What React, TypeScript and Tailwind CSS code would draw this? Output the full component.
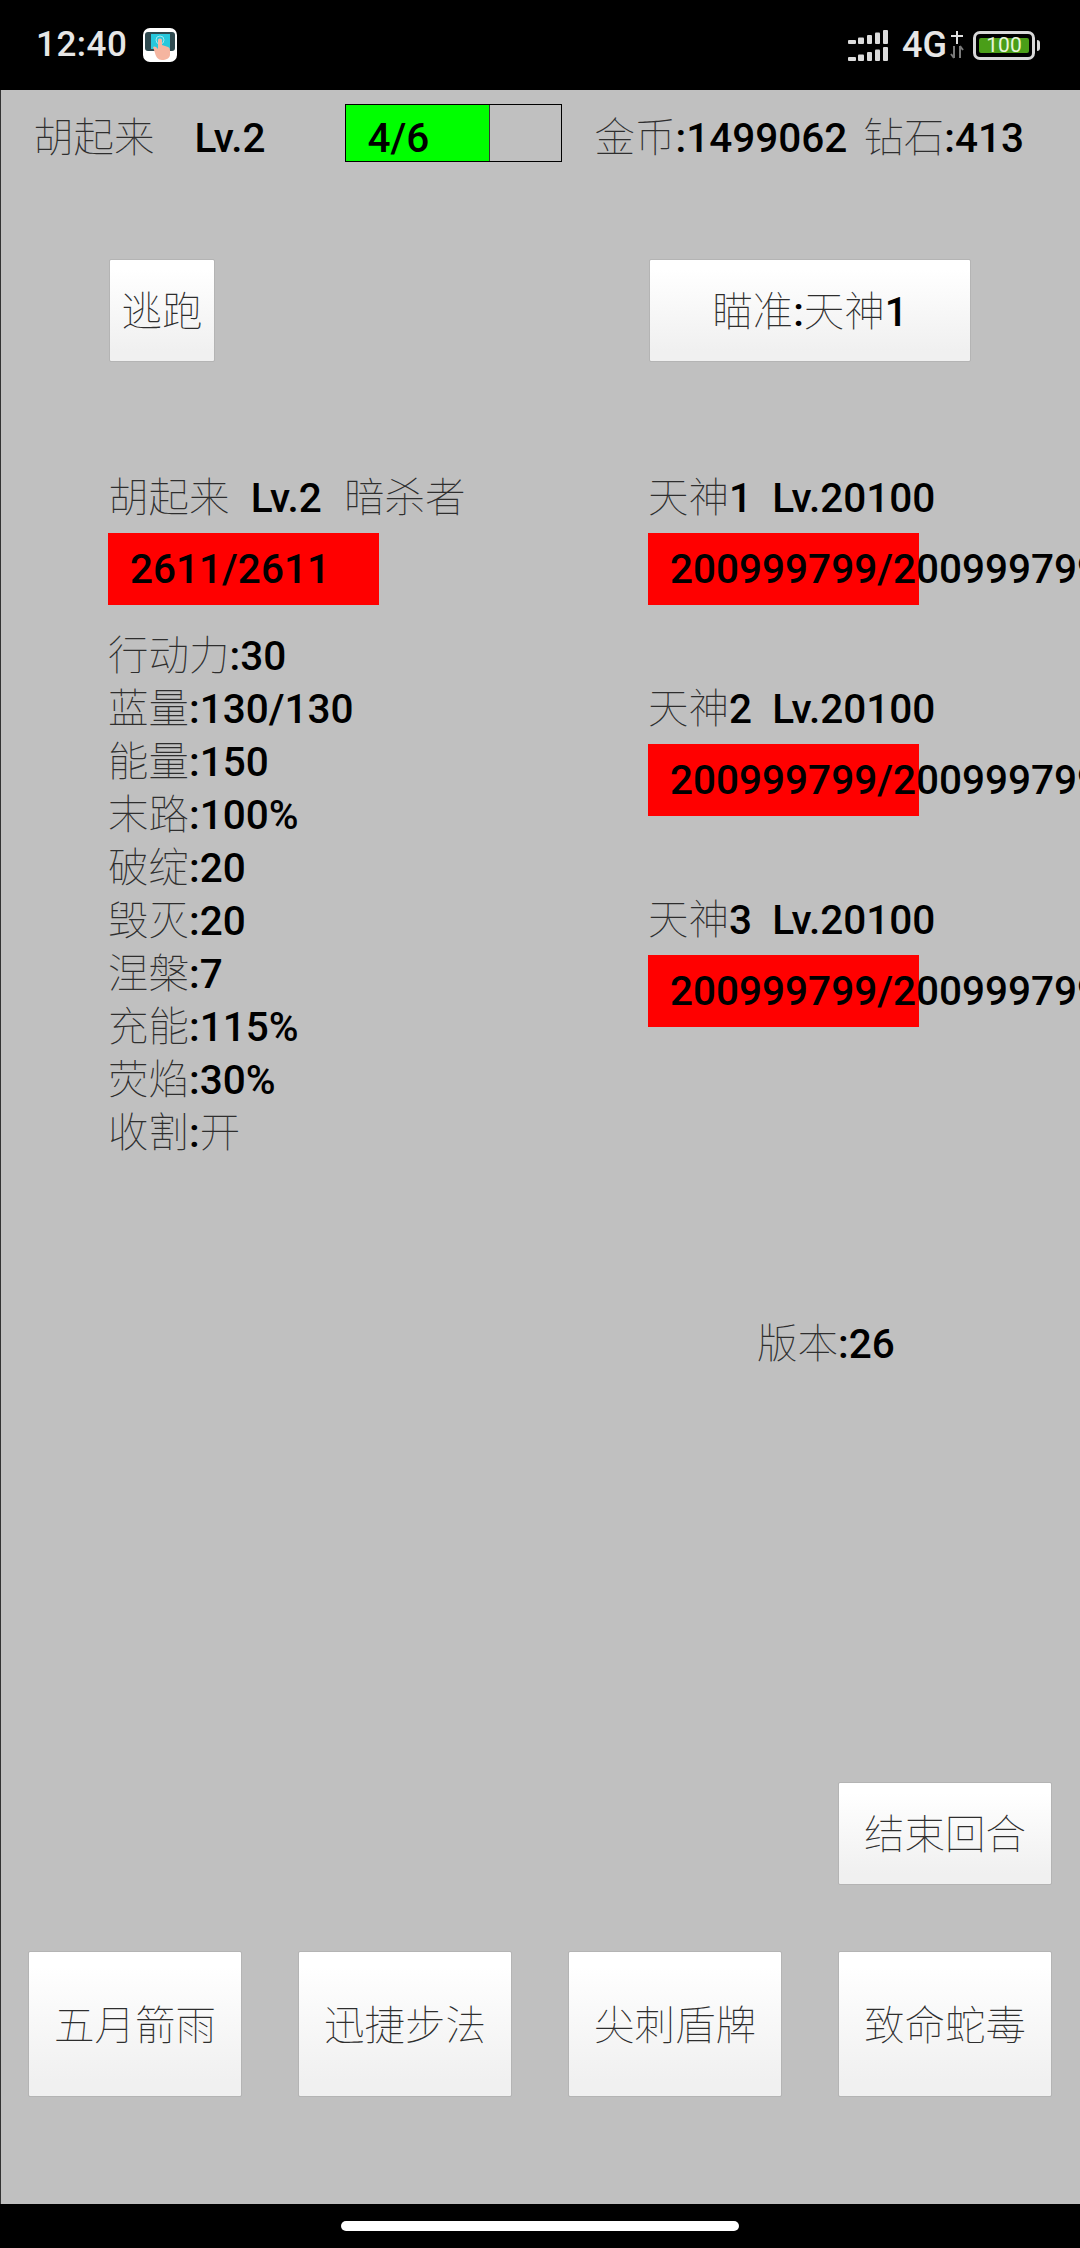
const latin = '"Roboto", "Noto Sans CJK SC", sans-serif';

function Cn({ children }: { children: string }) {
  return <span className="font-thin text-[#2e2e2e]">{children}</span>;
}

function GameButton({ className, children }: { className: string; children: React.ReactNode }) {
  return (
    <button className={`flex items-center justify-center rounded-[2px] border border-[#b4b4b4] bg-gradient-to-b from-white from-10% to-[#f0f0f0] to-90% pt-[4px] whitespace-pre ${className}`}>
      {children}
    </button>
  );
}

function HpBar({ text }: { text: string }) {
  return (
    <div className="flex h-[72px] w-[271px] items-center bg-[#ff0000] pl-[22px] whitespace-nowrap">
      {text}
    </div>
  );
}

function Enemy({ n }: { n: number }) {
  return (
    <div className="h-[211px]">
      <div className="h-[62px] leading-[55px] whitespace-pre">
        <Cn>天神</Cn>
        {n}  Lv.20100
      </div>
      <HpBar text="200999799/200999799" />
    </div>
  );
}

function AppIcon() {
  return (
    <svg width="34" height="34" viewBox="0 0 34 34">
      <rect width="34" height="34" rx="7" fill="#fff" />
      <rect x="2" y="4" width="30" height="19" rx="3" fill="#2f4a50" />
      <rect x="8" y="6" width="19" height="15" fill="#27c8dc" />
      <circle cx="17" cy="12" r="4" fill="none" stroke="#9be8f0" strokeWidth="1" />
      <path d="M15 12c0-2 4-2 4 0v5l6 2c2 1 2 2 2 4v4c0 3-4 5-8 5s-6-3-7-7l-2-6c1-1 3-1 5 2z" fill="#f5b5a0" />
    </svg>
  );
}

function Signal() {
  const bars = [
    [0, 8, 4],
    [10, 6, 6.5],
    [19, 5, 9],
    [27, 5, 11.5],
    [35, 5, 14],
  ];
  return (
    <svg width="40" height="31" viewBox="0 0 40 31" fill="#dcdcdc">
      {bars.map(([x, w, h]) => (
        <g key={x}>
          <rect x={x} y={14 - h} width={w} height={h} rx="1" />
          <rect x={x} y={31 - h} width={w} height={h} rx="1" />
        </g>
      ))}
    </svg>
  );
}

function DataArrows() {
  return (
    <svg width="15" height="28" viewBox="0 0 15 28" fill="none" strokeWidth="2">
      <path d="M7 0v13M1 5h12" stroke="#e0e0e0" />
      <path d="M4 15v12M1 23l3 4M10 15v12M10 15l3 4" stroke="#7a7a7a" />
    </svg>
  );
}

function Battery() {
  return (
    <div className="flex items-center gap-[2px]">
      <div className="flex h-[29px] w-[62px] items-center justify-center rounded-[7px] border-[3px] border-[#d8d8d8] px-[3px] py-[4px]">
        <div className="flex h-full w-full items-center justify-center rounded-[2px] bg-[#4a9e18] text-[21px] leading-none font-normal text-[#e8f5dc]">
          100
        </div>
      </div>
      <div className="h-[11px] w-[3px] rounded-r-sm bg-[#d8d8d8]" />
    </div>
  );
}

export default function App() {
  const stats = [
    ["行动力", ":30"],
    ["蓝量", ":130/130"],
    ["能量", ":150"],
    ["末路", ":100%"],
    ["破绽", ":20"],
    ["毁灭", ":20"],
    ["涅槃", ":7"],
    ["充能", ":115%"],
    ["荧焰", ":30%"],
    ["收割", ":"],
  ];

  return (
    <div
      className="flex h-[2248px] w-[1080px] flex-col overflow-hidden bg-black text-[40.5px] font-medium text-black"
      style={{ fontFamily: latin }}
    >
      {/* status bar */}
      <div className="flex h-[90px] shrink-0 items-center pr-[40px] pl-[36px] text-[#e6e6e6]">
        <span className="w-[107px] text-[35px] tracking-[0.5px]">12:40</span>
        <AppIcon />
        <div className="ml-auto flex items-center">
          <Signal />
          <span className="ml-[14px] w-[43px] text-[36px] whitespace-nowrap">4G</span>
          <span className="mr-[8px] ml-[5px]"><DataArrows /></span>
          <Battery />
        </div>
      </div>

      <div className="flex flex-1 flex-col border-l border-[#333] bg-[#c0c0c0]">
        {/* top info row */}
        <div className="mt-[14px] flex h-[58px] items-center pl-[32px] whitespace-pre">
          <span className="pt-[10px]"><Cn>胡起来</Cn></span>
          <span className="ml-[40px] w-[150px] pt-[10px]">Lv.2</span>
          <div className="flex h-[58px] w-[217px] border border-black">
            <div className="flex w-[143px] items-center bg-[#00ff00] pt-[10px] pl-[22px]">4/6</div>
            <div className="border-l border-[#333]" />
          </div>
          <span className="ml-[33px] pt-[10px]">
            <Cn>金币</Cn>:1499062
          </span>
          <span className="ml-[16px] pt-[10px]">
            <Cn>钻石</Cn>:413
          </span>
        </div>

        {/* battle area */}
        <div className="mt-[97px] grid grid-cols-[647px_1fr]">
          <div className="pl-[107px]">
            <GameButton className="ml-[1px] h-[103px] w-[106px]"><Cn>逃跑</Cn></GameButton>
            <div className="mt-[109px] h-[62px] leading-[55px] whitespace-pre">
              <Cn>胡起来</Cn>
              <span className="ml-[1px]">  Lv.2  </span>
              <span className="ml-[2px]"><Cn>暗杀者</Cn></span>
            </div>
            <HpBar text="2611/2611" />
            <div className="mt-[25px] leading-[53px]">
              {stats.map(([label, value]) => (
                <div key={label}>
                  <Cn>{label}</Cn>
                  {value}
                  {label === "收割" && <Cn>开</Cn>}
                </div>
              ))}
            </div>
          </div>
          <div>
            <GameButton className="ml-[1px] h-[103px] w-[322px]">
              <span><Cn>瞄准</Cn>:<Cn>天神</Cn>1</span>
            </GameButton>
            <div className="mt-[109px]">
              <Enemy n={1} />
              <Enemy n={2} />
              <Enemy n={3} />
            </div>
          </div>
        </div>

        <div className="mt-[158px] pl-[756px] leading-[53px]">
          <Cn>版本</Cn>:26
        </div>

        <div className="mt-[411px] flex justify-end pr-[28px]">
          <GameButton className="h-[103px] w-[214px]"><Cn>结束回合</Cn></GameButton>
        </div>

        {/* skills */}
        <div className="mt-[66px] flex gap-[56px] pl-[27px]">
          {["五月箭雨", "迅捷步法", "尖刺盾牌", "致命蛇毒"].map((s) => (
            <GameButton key={s} className="h-[146px] w-[214px]"><Cn>{s}</Cn></GameButton>
          ))}
        </div>
      </div>

      {/* nav bar */}
      <div className="flex h-[44px] shrink-0 items-center justify-center">
        <div className="h-[10px] w-[398px] rounded-full bg-white" />
      </div>
    </div>
  );
}
